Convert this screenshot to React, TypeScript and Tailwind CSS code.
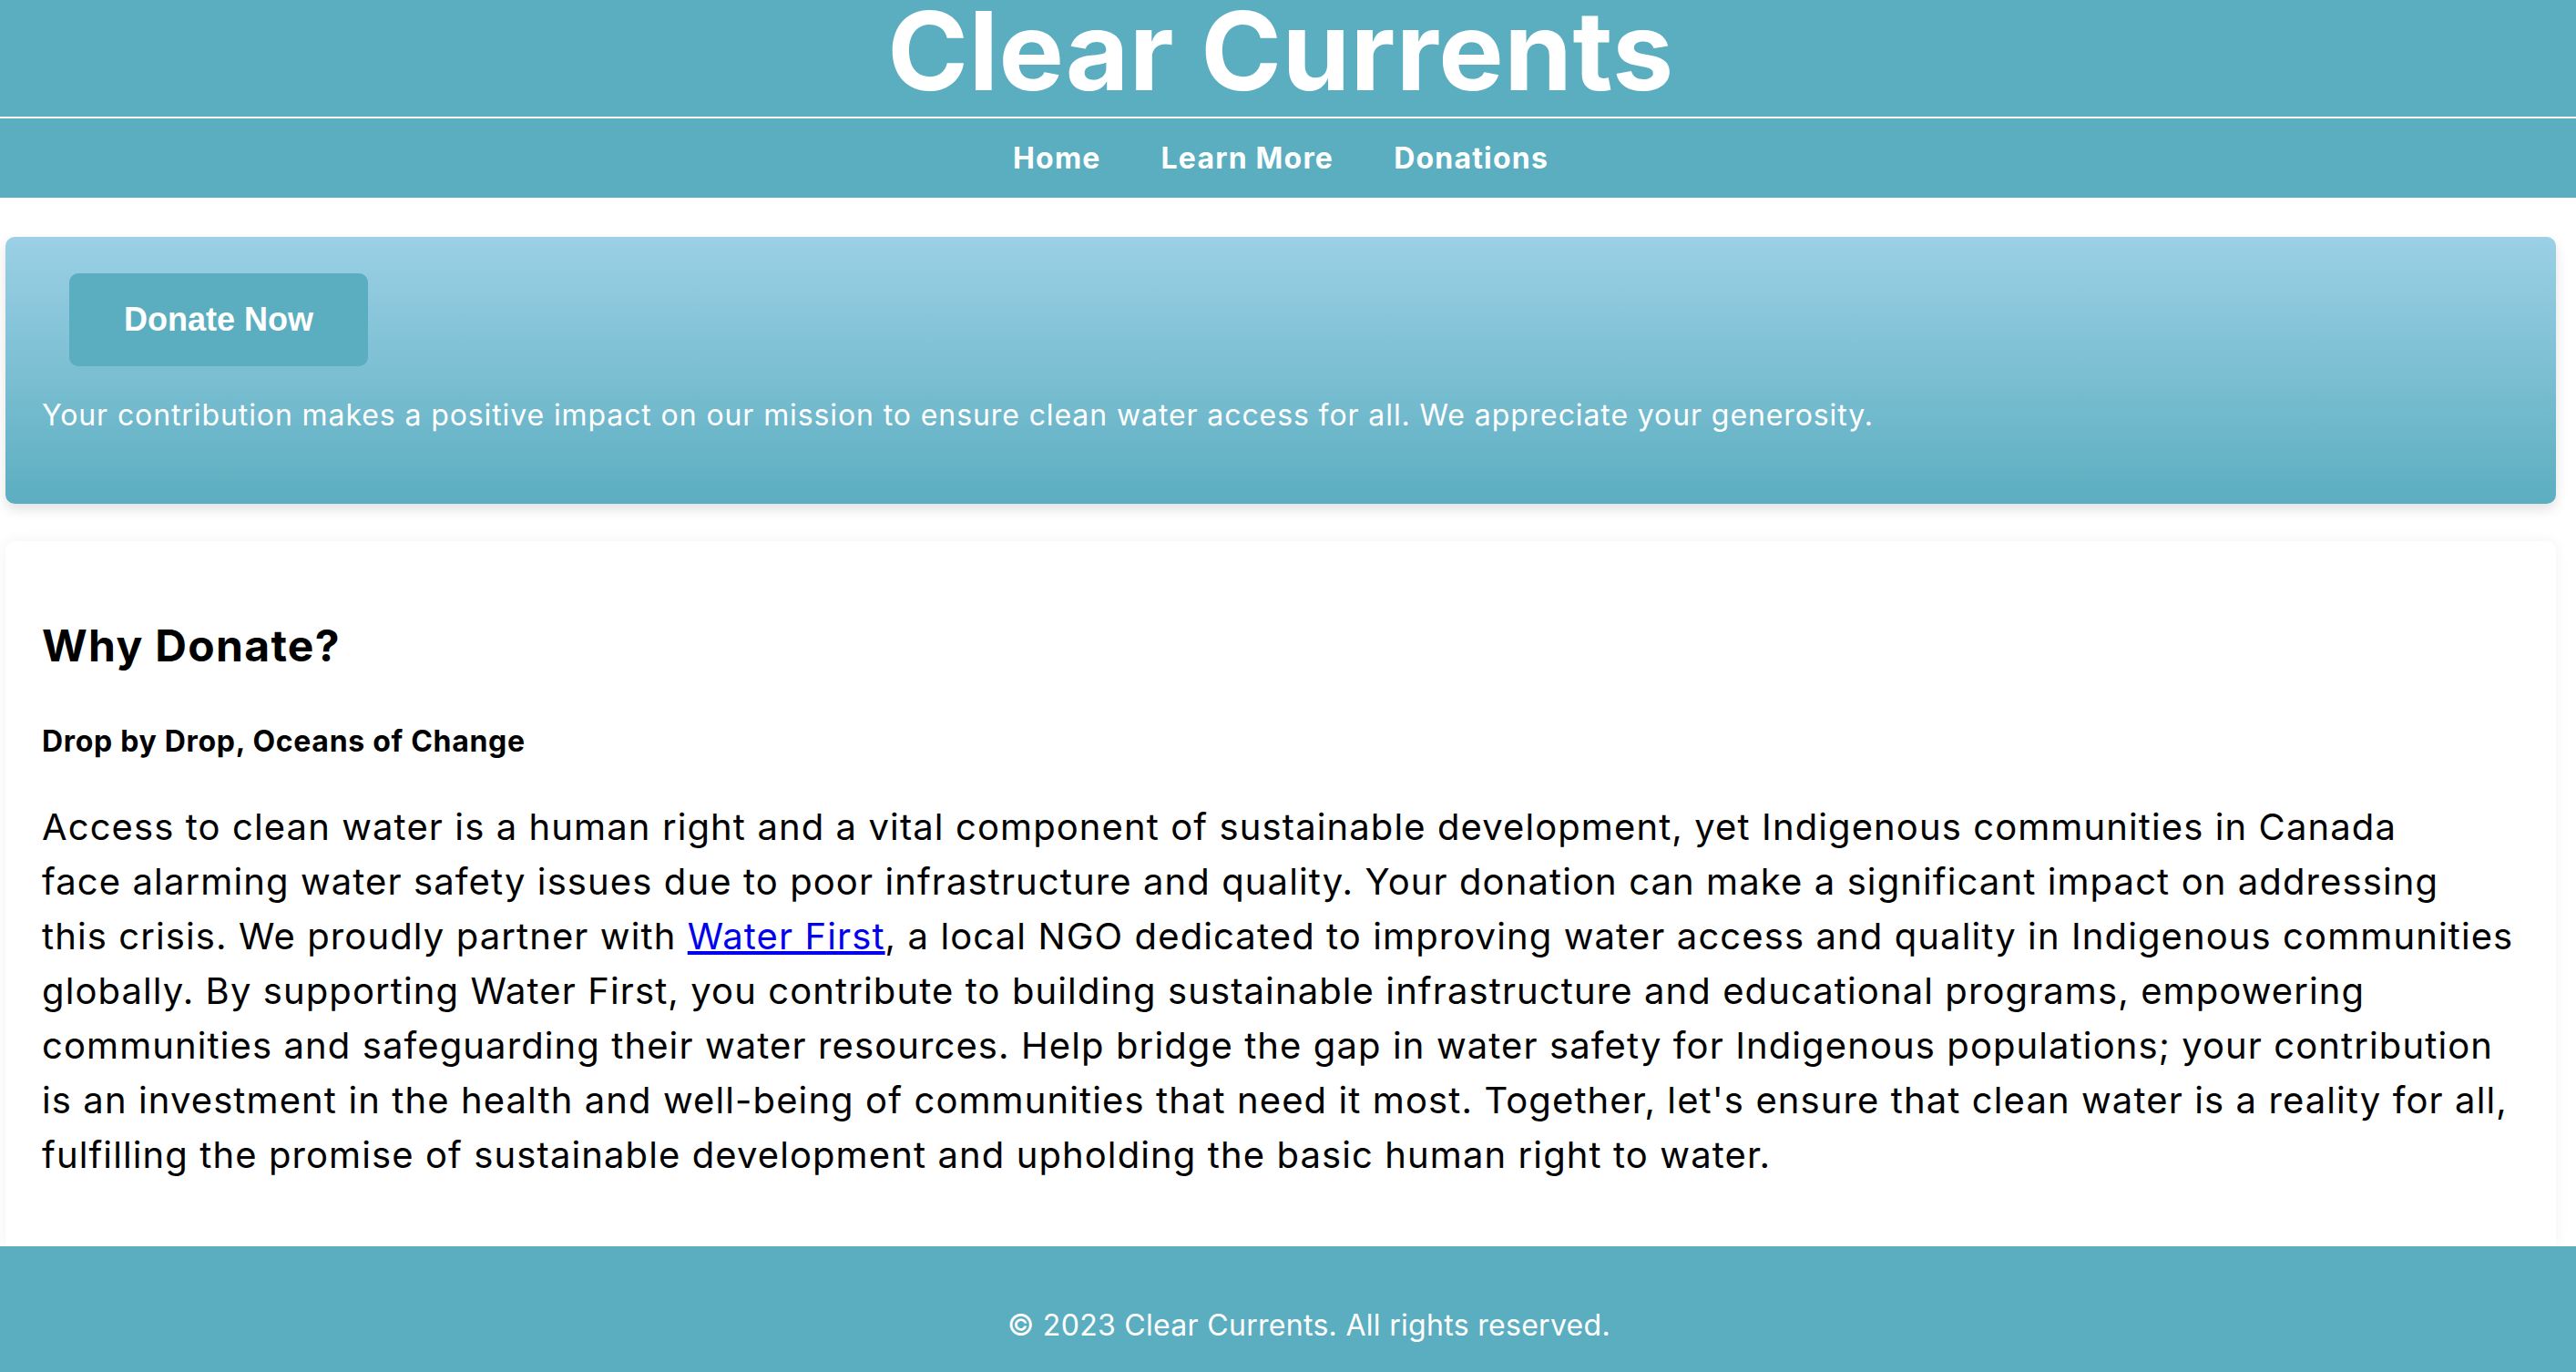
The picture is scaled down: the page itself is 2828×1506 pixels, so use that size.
import React from 'react';

const NAV_LINKS = ['Home', 'Learn More', 'Donations'];

const App: React.FC = () => {
  return (
    <div className="min-h-screen flex flex-col bg-white font-['Inter',sans-serif] text-black">
      {/* Header */}
      <header className="bg-[#5baec0] text-white">
        <h1 className="h-[130px] border-b-2 border-white pr-[16px] text-center text-[120px] font-bold leading-[111px] tracking-[0.5px]">
          Clear Currents
        </h1>
        <nav className="h-[87px] pr-[16px] flex justify-center items-center gap-[66px]">
          {NAV_LINKS.map((l) => (
            <a key={l} href="#" className="text-[32px] font-bold tracking-[1.2px] text-white">
              {l}
            </a>
          ))}
        </nav>
      </header>

      <main className="flex-1 flex flex-col pt-[43px]">
        {/* Donate card */}
        <section className="ml-[6px] mr-[22px] h-[293px] rounded-[10px] bg-gradient-to-b from-[#9bd0e6] to-[#5baec0] shadow-[0_6px_14px_rgba(0,0,0,0.12)] px-[40px] pt-[40px]">
          <button className="ml-[30px] w-[328px] h-[102px] rounded-[10px] bg-[#5baec0] text-white text-[36px] font-bold font-['Liberation_Sans',Arial,sans-serif]">
            Donate Now
          </button>
          <p className="mt-[30px] text-white text-[32px] leading-[48px] tracking-[0.9px]">
            Your contribution makes a positive impact on our mission to ensure clean water access for all. We appreciate your generosity.
          </p>
        </section>

        {/* Why donate */}
        <section className="flex-1 mt-[41px] ml-[6px] mr-[22px] rounded-t-[10px] bg-white shadow-[0_0_16px_rgba(0,0,0,0.06)] px-[40px] pt-[86px] pb-[70px]">
          <h2 className="text-[48px] font-bold leading-[58px] tracking-[1.3px]">Why Donate?</h2>
          <h3 className="mt-[56px] text-[32px] font-bold leading-[39px] tracking-[0.7px]">Drop by Drop, Oceans of Change</h3>
          <p className="mt-[45px] whitespace-nowrap text-[40px] leading-[60px] tracking-[1.1px]">
            Access to clean water is a human right and a vital component of sustainable development, yet Indigenous communities in Canada
            <br />
            face alarming water safety issues due to poor infrastructure and quality. Your donation can make a significant impact on addressing
            <br />
            this crisis. We proudly partner with{' '}
            <a href="#" className="text-[#0000ee] underline">
              Water First
            </a>
            , a local NGO dedicated to improving water access and quality in Indigenous communities
            <br />
            globally. By supporting Water First, you contribute to building sustainable infrastructure and educational programs, empowering
            <br />
            communities and safeguarding their water resources. Help bridge the gap in water safety for Indigenous populations; your contribution
            <br />
            is an investment in the health and well-being of communities that need it most. Together, let's ensure that clean water is a reality for all,
            <br />
            fulfilling the promise of sustainable development and upholding the basic human right to water.
          </p>
        </section>
      </main>

      {/* Footer */}
      <footer className="h-[138px] bg-[#5baec0] pl-[46px] pt-[63px] text-center text-white text-[32px] leading-[48px] tracking-[0.3px]">
        © 2023 Clear Currents. All rights reserved.
      </footer>
    </div>
  );
};

export default App;
